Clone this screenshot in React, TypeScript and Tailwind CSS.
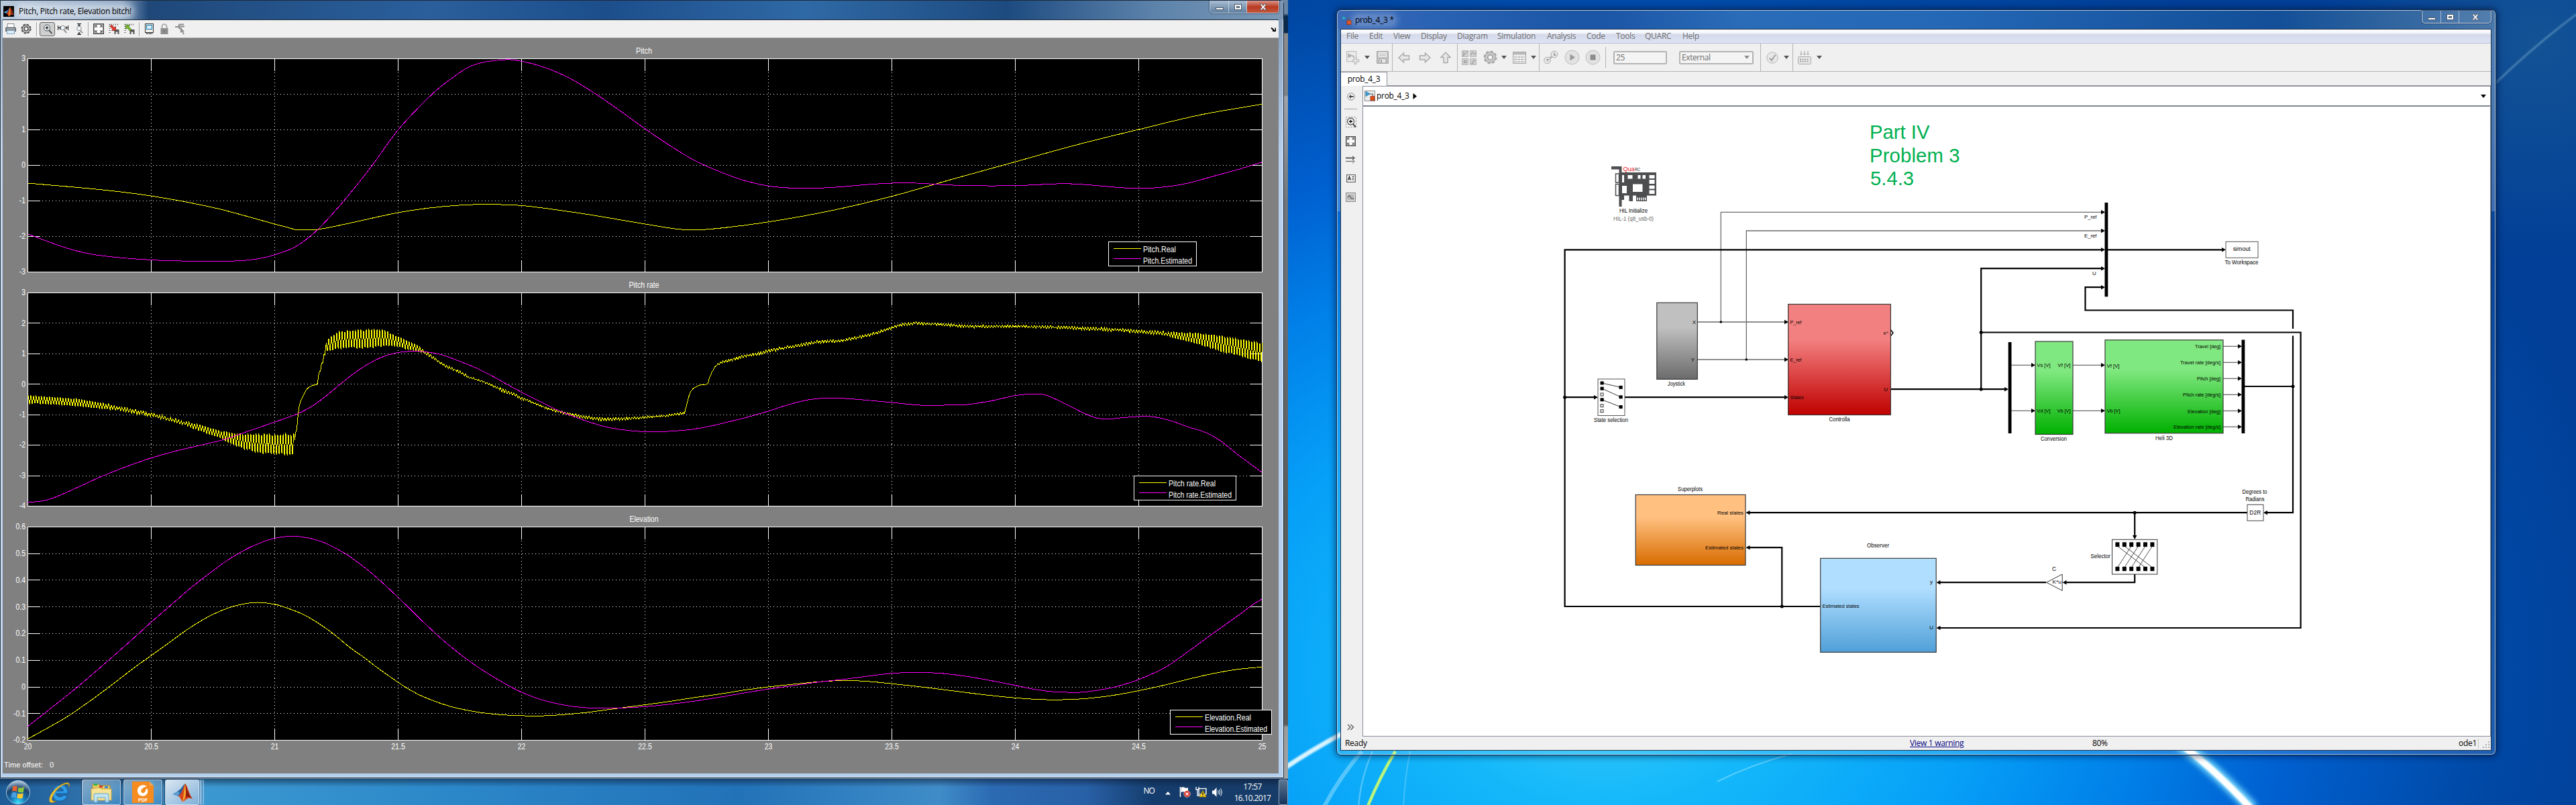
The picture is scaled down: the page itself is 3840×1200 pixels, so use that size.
import React from 'react';

/* ------------------------------------------------------------------ */
/* Shared helpers                                                      */
/* ------------------------------------------------------------------ */

type Pt = [number, number];

const SANS = 'Liberation Sans, Arial, sans-serif';
const UI = "font-['Open_Sans','Noto_Sans',sans-serif]";

type LabelProps = {
  x: number;
  y: number;
  children: string;
  w?: number;
  size?: number;
  anchor?: 'start' | 'middle' | 'end';
  fill?: string;
};

/* y is the vertical centre of the capitals */
function Label({ x, y, children, w, size = 12, anchor = 'start', fill = '#000' }: LabelProps) {
  return (
    <text
      x={x}
      y={y + size * 0.36}
      fontFamily={SANS}
      fontSize={size}
      textAnchor={anchor}
      fill={fill}
      textLength={w}
      lengthAdjust="spacingAndGlyphs"
    >
      {children}
    </text>
  );
}

/* ------------------------------------------------------------------ */
/* Scope data                                                          */
/* ------------------------------------------------------------------ */

const pitchReal: Pt[] = [
  [20, -0.5], [20.29, -0.68], [20.5, -0.86], [20.753, -1.19], [21, -1.65], [21.06, -1.76], [21.085, -1.81], [21.12, -1.815],
  [21.17, -1.81], [21.297, -1.635], [21.5, -1.33], [21.625, -1.2], [21.75, -1.12], [21.85, -1.1], [22, -1.13], [22.25, -1.36],
  [22.5, -1.65], [22.63, -1.79], [22.7, -1.815], [22.8, -1.77], [23, -1.59], [23.25, -1.28], [23.5, -0.87], [23.75, -0.38],
  [24, 0.1], [24.25, 0.58], [24.5, 1.01], [24.75, 1.42], [25, 1.72],
];
const pitchEst: Pt[] = [
  [20, -1.93], [20.155, -2.32], [20.277, -2.52], [20.5, -2.66], [20.75, -2.7], [20.87, -2.68], [20.93, -2.63], [21, -2.515],
  [21.086, -2.28], [21.172, -1.82], [21.28, -1], [21.395, 0], [21.5, 1], [21.628, 1.94], [21.7, 2.36], [21.8, 2.81],
  [21.93, 2.97], [22, 2.93], [22.1, 2.74], [22.2, 2.43], [22.3, 2.01], [22.4, 1.53], [22.5, 1.03], [22.6, 0.56], [22.7, 0.14],
  [22.8, -0.17], [22.9, -0.42], [23, -0.58], [23.1, -0.64], [23.2, -0.64], [23.3, -0.6], [23.4, -0.54], [23.5, -0.5],
  [23.6, -0.5], [23.7, -0.54], [23.8, -0.57], [24, -0.57], [24.19, -0.515], [24.28, -0.54], [24.38, -0.6], [24.5, -0.65],
  [24.6, -0.61], [24.69, -0.515], [24.79, -0.33], [24.9, -0.12], [25, 0.09],
];
const rateEst: Pt[] = [
  [20, -3.87], [20.05, -3.84], [20.1, -3.74], [20.2, -3.39], [20.3, -3.02], [20.4, -2.7], [20.5, -2.42], [20.6, -2.19],
  [20.7, -2], [20.8, -1.8], [20.9, -1.52], [21, -1.24], [21.095, -0.96], [21.157, -0.69], [21.212, -0.36], [21.265, 0],
  [21.337, 0.45], [21.4, 0.76], [21.448, 0.93], [21.5, 1.04], [21.55, 1.08], [21.614, 1.06], [21.68, 0.96], [21.75, 0.75],
  [21.82, 0.52], [21.89, 0.23], [21.945, -0.02], [22, -0.26], [22.07, -0.55], [22.14, -0.825], [22.195, -1.01],
  [22.264, -1.21], [22.33, -1.375], [22.4, -1.485], [22.5, -1.56], [22.58, -1.55], [22.67, -1.5], [22.75, -1.4],
  [22.83, -1.25], [22.917, -1.075], [23, -0.88], [23.09, -0.65], [23.17, -0.5], [23.25, -0.45], [23.35, -0.49],
  [23.5, -0.6], [23.62, -0.69], [23.75, -0.68], [23.8, -0.67], [23.9, -0.55], [24, -0.37], [24.07, -0.32], [24.12, -0.35],
  [24.2, -0.63], [24.27, -0.92], [24.33, -1.11], [24.38, -1.14], [24.43, -1.1], [24.5, -1.06], [24.56, -1.07],
  [24.63, -1.2], [24.7, -1.4], [24.77, -1.58], [24.83, -1.85], [24.9, -2.3], [24.95, -2.6], [25, -2.9],
];

/* time, centre, half amplitude of the ripple */
const rateReal: [number, number, number][] = [
  [20, -0.5, 0.13], [20.1, -0.54, 0.12], [20.2, -0.6, 0.12], [20.35, -0.76, 0.08], [20.5, -1, 0.07], [20.65, -1.31, 0.08],
  [20.78, -1.65, 0.12], [20.83, -1.8, 0.18], [20.88, -1.88, 0.26], [20.95, -1.95, 0.32], [21, -1.97, 0.34], [21.079, -1.98, 0.36],
  [21.08, -2, 0], [21.083, -1.65, 0], [21.09, -1.45, 0], [21.095, -0.97, 0], [21.1, -0.68, 0], [21.108, -0.5, 0],
  [21.117, -0.35, 0], [21.125, -0.22, 0], [21.133, -0.13, 0], [21.145, -0.07, 0], [21.158, -0.03, 0.02], [21.173, 0, 0],
  [21.176, 0.2, 0], [21.18, 0.41, 0], [21.186, 0.42, 0], [21.189, 0.69, 0], [21.196, 0.71, 0.02], [21.199, 1, 0.05],
  [21.205, 1.1, 0.12], [21.213, 1.28, 0.2], [21.225, 1.32, 0.22], [21.255, 1.45, 0.28], [21.3, 1.47, 0.31], [21.4, 1.5, 0.31],
  [21.445, 1.52, 0.28], [21.478, 1.45, 0.2], [21.5, 1.4, 0.18], [21.533, 1.3, 0.14], [21.575, 1.2, 0.1], [21.603, 1.07, 0.07],
  [21.63, 0.95, 0.06], [21.67, 0.7, 0.06], [21.7, 0.57, 0.04], [21.75, 0.4, 0.05], [21.79, 0.22, 0.04], [21.84, 0.1, 0.02],
  [21.88, -0.03, 0.03], [21.92, -0.19, 0.05], [21.96, -0.31, 0.05], [22, -0.45, 0.06], [22.03, -0.55, 0.04],
  [22.07, -0.68, 0.02], [22.1, -0.78, 0.03], [22.16, -0.92, 0.04], [22.25, -1.07, 0.05], [22.3, -1.13, 0.05],
  [22.34, -1.15, 0.06], [22.42, -1.13, 0.05], [22.5, -1.09, 0.04], [22.6, -1.02, 0.03], [22.66, -0.94, 0.04],
  [22.664, -0.82, 0], [22.67, -0.64, 0], [22.675, -0.46, 0], [22.684, -0.25, 0], [22.695, -0.14, 0], [22.71, -0.07, 0],
  [22.724, -0.025, 0], [22.754, 0, 0], [22.762, 0.24, 0.02], [22.77, 0.38, 0.02], [22.78, 0.53, 0.02], [22.79, 0.63, 0.02],
  [22.81, 0.72, 0.04], [22.86, 0.82, 0.05], [22.9, 0.92, 0.05], [22.95, 0.98, 0.05], [23, 1.1, 0.06], [23.05, 1.17, 0.06],
  [23.1, 1.24, 0.05], [23.2, 1.39, 0.05], [23.3, 1.43, 0.04], [23.4, 1.6, 0.05], [23.47, 1.77, 0.04], [23.54, 1.96, 0.05],
  [23.6, 2, 0.04], [23.7, 1.96, 0.04], [23.8, 1.9, 0.05], [24, 1.9, 0.04], [24.2, 1.86, 0.05], [24.4, 1.79, 0.06],
  [24.5, 1.73, 0.06], [24.6, 1.67, 0.07], [24.68, 1.57, 0.12], [24.75, 1.48, 0.2], [24.82, 1.36, 0.26], [24.9, 1.22, 0.28],
  [25, 1.04, 0.32],
];
const elevReal: Pt[] = [
  [20, -0.195], [20.15, -0.117], [20.25, -0.054], [20.335, 0.004], [20.432, 0.073], [20.5, 0.118], [20.568, 0.163],
  [20.655, 0.221], [20.743, 0.269], [20.82, 0.299], [20.879, 0.312], [20.93, 0.317], [21, 0.31], [21.053, 0.295],
  [21.12, 0.27], [21.19, 0.231], [21.247, 0.192], [21.306, 0.147], [21.364, 0.109], [21.41, 0.076], [21.5, 0.017],
  [21.55, -0.012], [21.6, -0.036], [21.7, -0.07], [21.8, -0.091], [21.9, -0.103], [22, -0.108], [22.1, -0.108],
  [22.25, -0.097], [22.4, -0.079], [22.5, -0.067], [22.6, -0.054], [22.7, -0.04], [22.8, -0.027], [22.9, -0.012],
  [23, 0], [23.1, 0.01], [23.2, 0.019], [23.3, 0.024], [23.4, 0.021], [23.5, 0.012], [23.6, 0.002], [23.7, -0.009],
  [23.8, -0.021], [23.9, -0.032], [24, -0.041], [24.1, -0.047], [24.18, -0.048], [24.28, -0.044], [24.4, -0.031],
  [24.5, -0.014], [24.6, 0.006], [24.7, 0.029], [24.8, 0.05], [24.9, 0.066], [25, 0.075],
];
const elevEst: Pt[] = [
  [20, -0.148], [20.083, -0.0875], [20.2, -0.001], [20.316, 0.091], [20.413, 0.17], [20.5, 0.243], [20.587, 0.313],
  [20.665, 0.375], [20.733, 0.424], [20.8, 0.47], [20.86, 0.504], [20.917, 0.531], [20.975, 0.551], [21.02, 0.561],
  [21.07, 0.565], [21.13, 0.56], [21.19, 0.545], [21.247, 0.52], [21.296, 0.494], [21.354, 0.455], [21.41, 0.413],
  [21.5, 0.336], [21.6, 0.245], [21.7, 0.161], [21.8, 0.089], [21.9, 0.03], [22, -0.02], [22.1, -0.053], [22.2, -0.072],
  [22.3, -0.08], [22.4, -0.079], [22.5, -0.074], [22.6, -0.065], [22.7, -0.053], [22.8, -0.039], [22.9, -0.023],
  [23, -0.008], [23.1, 0.005], [23.2, 0.018], [23.3, 0.028], [23.4, 0.04], [23.5, 0.051], [23.6, 0.054], [23.7, 0.051],
  [23.8, 0.04], [23.9, 0.024], [24, 0.006], [24.073, -0.008], [24.14, -0.017], [24.2, -0.02], [24.268, -0.02],
  [24.336, -0.012], [24.404, 0], [24.5, 0.028], [24.61, 0.075], [24.705, 0.136], [24.8, 0.2], [24.909, 0.272],
  [24.967, 0.312], [25, 0.33],
];

function ripple(data: [number, number, number][]): Pt[] {
  const out: Pt[] = [];
  const phase = [1, 0.9, -0.9, -1];
  let seed = 7;
  let k = 0;
  for (let i = 0; i <= 1840; i++) {
    const t = 20 + i / 368;
    while (k < data.length - 2 && data[k + 1][0] < t) k++;
    const a = data[k];
    const b = data[k + 1];
    const f = Math.min(1, Math.max(0, (t - a[0]) / (b[0] - a[0])));
    seed = (seed * 1103515245 + 12345) % 2147483648;
    const rnd = seed / 2147483648;
    const amp = a[2] + (b[2] - a[2]) * f;
    const wave = amp > 0.09 ? phase[i % 4] * (0.8 + 0.25 * rnd) : phase[i % 4] * (0.2 + 0.9 * rnd);
    out.push([t, a[1] + (b[1] - a[1]) * f + amp * wave]);
  }
  return out;
}

/* Cubic Hermite through the samples */
function smooth(pts: Pt[], sx: (t: number) => number, sy: (v: number) => number): string {
  const p = pts.map(([t, v]) => [sx(t), sy(v)] as Pt);
  const slope = p.map((_, i) => {
    const a = p[Math.max(0, i - 1)];
    const b = p[Math.min(p.length - 1, i + 1)];
    return (b[1] - a[1]) / (b[0] - a[0]);
  });
  let d = `M${p[0][0]} ${p[0][1].toFixed(1)}`;
  for (let i = 1; i < p.length; i++) {
    const h = (p[i][0] - p[i - 1][0]) / 3;
    d += `C${(p[i - 1][0] + h).toFixed(1)} ${(p[i - 1][1] + h * slope[i - 1]).toFixed(1)} ${(p[i][0] - h).toFixed(1)} ${(p[i][1] - h * slope[i]).toFixed(1)} ${p[i][0].toFixed(1)} ${p[i][1].toFixed(1)}`;
  }
  return d;
}

type PlotProps = {
  title: string;
  titleW: number;
  min: number;
  max: number;
  ticks: string[];
  real: Pt[];
  est: Pt[];
  jagged?: boolean;
  xLabels?: boolean;
  legend: { x: number; y: number; w: number; names: [string, string]; widths: [number, number] };
};

const YELLOW = '#ffff00';
const MAGENTA = '#ff00ff';

function Plot({ title, titleW, min, max, ticks, real, est, jagged, xLabels, legend }: PlotProps) {
  const L = 37.5;
  const R = 1877.5;
  const T = 30.5;
  const B = 348.5;
  const sx = (t: number) => L + (t - 20) * 368;
  const sy = (v: number) => T + ((max - v) / (max - min)) * (B - T);
  const realPath = jagged
    ? 'M' + real.map(([t, v]) => `${sx(t).toFixed(1)} ${sy(v).toFixed(1)}`).join('L')
    : smooth(real, sx, sy);
  const xs = [20, 20.5, 21, 21.5, 22, 22.5, 23, 23.5, 24, 24.5, 25];
  return (
    <svg width="1902" height={xLabels ? 372 : 349} className="block shrink-0 overflow-visible">
      <rect x={L} y={T} width={R - L} height={B - T} fill="#000" />
      <g stroke="#fff" strokeWidth="1" shapeRendering="crispEdges" fill="none">
        {xs.slice(1, -1).map((t) => (
          <g key={t}>
            <path d={`M${sx(t)} ${T}V${T + 18}M${sx(t)} ${B}V${B - 18}`} />
            <path d={`M${sx(t)} ${T + 20}V${B - 18}`} strokeDasharray="1 4" />
          </g>
        ))}
        {ticks.slice(1, -1).map((tk) => {
          const y = Math.round(sy(parseFloat(tk)) - 0.5) + 0.5;
          return (
            <g key={tk}>
              <path d={`M${L} ${y}H${L + 18}M${R} ${y}H${R - 19}`} />
              <path d={`M${L + 21} ${y}H${R - 19}`} strokeDasharray="1 4" />
            </g>
          );
        })}
        <rect x={L} y={T} width={R - L} height={B - T} />
        <path d={realPath} stroke={YELLOW} />
        <path d={smooth(est, sx, sy)} stroke={MAGENTA} />
      </g>
      <Label x={956} y={18.5} anchor="middle" w={titleW} fill="#fff">{title}</Label>
      {ticks.map((tk) => (
        <Label key={tk} x={34} y={sy(parseFloat(tk)) - 0.5} anchor="end" fill="#fff" w={tk.replace('-', '').replace('.', '').length * 5.8 + (tk.includes('-') ? 3.4 : 0) + (tk.includes('.') ? 3 : 0)}>
          {tk}
        </Label>
      ))}
      {xLabels &&
        xs.map((t) => (
          <Label key={t} x={sx(t)} y={358} anchor="middle" fill="#fff" w={t % 1 ? 20.5 : 11.5}>
            {String(t)}
          </Label>
        ))}
      <rect x={legend.x + 0.5} y={legend.y + 0.5} width={legend.w} height="36" fill="#000" stroke="#fff" />
      {[YELLOW, MAGENTA].map((c, i) => (
        <g key={c}>
          <path d={`M${legend.x + 8} ${legend.y + 10.5 + i * 15}h41`} stroke={c} />
          <Label x={legend.x + 52} y={legend.y + 11.5 + i * 17} fill="#fff" w={legend.widths[i]}>
            {legend.names[i]}
          </Label>
        </g>
      ))}
    </svg>
  );
}

/* ------------------------------------------------------------------ */
/* Icons                                                               */
/* ------------------------------------------------------------------ */

function MatlabLogo({ size, tile }: { size: number; tile?: boolean }) {
  return (
    <svg width={size} height={size} viewBox="0 0 32 32" className="shrink-0">
      {tile && <rect width="32" height="32" fill="#000" />}
      <path d="M1 19L9 14L13 17L9 22Z" fill="#5b9bd0" />
      <path d="M9 14C14 12 16 6 20 3L14 19L9 22L12 17Z" fill="#2c5f9a" />
      <path d="M20 3C17 8 15 20 9 22C13 22 14 29 16 30C22 29 22 22 31 26C26 19 23 5 20 3Z" fill="#d8461c" />
      <path d="M20 3C18 12 18 22 16 30C20 28 21 20 21 14Z" fill="#f5a62a" />
      <path d="M20 3C23 10 24 19 31 26C26 22 23 22 21 24C22 16 21 8 20 3Z" fill="#8c1e12" />
    </svg>
  );
}

function SimulinkLogo({ boxed }: { boxed?: boolean }) {
  return (
    <svg width="16" height="16" viewBox="0 0 16 16" className="shrink-0">
      {boxed && <rect x=".5" y=".5" width="15" height="15" fill="#ececec" stroke="#8c8c8c" />}
      <path d="M2 1.5L8.5 5L2 8.5Z" fill="#3aa4d8" stroke="#1b6c9c" strokeWidth=".7" />
      <path d="M8.500 5H12.500V9" fill="none" stroke="#555" />
      <rect x="9" y="8.700" width="6" height="6" fill="#e2501e" stroke="#9a2c0a" strokeWidth=".8" />
    </svg>
  );
}

function Gear({ size, color, bg }: { size: number; color: string; bg: string }) {
  return (
    <svg width={size} height={size} viewBox="0 0 20 20" className="shrink-0">
      <circle cx="10" cy="10" r="8" fill="none" stroke={color} strokeWidth="3" strokeDasharray="3.6 2.680" />
      <circle cx="10" cy="10" r="7.300" fill={bg} stroke={color} strokeWidth="1.500" />
      <circle cx="10" cy="10" r="3.700" fill="#f4f4f4" stroke={color} strokeWidth="2" />
    </svg>
  );
}

function Magnifier({ plus, r = 4.5 }: { plus?: boolean; r?: number }) {
  return (
    <svg width="16" height="18" viewBox="0 0 16 18" className="shrink-0">
      <path d="M10 11L14.500 16" stroke="#555" strokeWidth="2" />
      <circle cx="7" cy="7.500" r={r} fill="#eef6fb" stroke="#444" />
      {plus && <path d="M4.500 7.500h5M7 5v5" stroke="#000" strokeWidth="1.200" />}
    </svg>
  );
}

function FitIcon({ size }: { size: number }) {
  return (
    <svg width={size} height={size} viewBox="0 0 16 16" className="shrink-0">
      <rect x=".8" y=".8" width="14.400" height="14.400" fill="#fff" stroke="#4a4a4a" strokeWidth="1.600" />
      <path d="M3 6V3H6M10 3H13V6M13 10V13H10M6 13H3V10M3 3L6 6M13 3L10 6M13 13L10 10M3 13L6 10" stroke="#333" fill="none" />
    </svg>
  );
}

function AxisSave({ color, dark, flip }: { color: string; dark: string; flip?: boolean }) {
  return (
    <svg width="16" height="17" viewBox="0 0 16 17" className="shrink-0">
      <path d="M1 1.500H16" stroke="#555" strokeWidth="2" strokeDasharray="1 2" />
      <path d="M1.500 1V16" stroke="#555" strokeWidth="2" strokeDasharray="1 2" />
      <rect x="8.500" y="9" width="7" height="7" fill="#555" />
      <rect x="10.500" y="12.500" width="3" height="3.500" fill="#eee" />
      <path
        d="M2.500 2.500H8.500L7 4.500L11 9L8.500 11L4.500 6.800L2.500 8.500Z"
        fill={color}
        stroke={dark}
        strokeWidth=".7"
        transform={flip ? 'rotate(180 6.5 6.5)' : undefined}
      />
    </svg>
  );
}

function Caret({ color = '#555' }: { color?: string }) {
  return (
    <svg width="8" height="5" viewBox="0 0 8 5" className="shrink-0">
      <path d="M0 0H8L4 5Z" fill={color} />
    </svg>
  );
}

function Arrow({ rotate }: { rotate: string }) {
  return (
    <svg width="18" height="18" viewBox="0 0 18 18" className={`shrink-0 ${rotate}`}>
      <path d="M1 9L8.500 2V6H16.500V12H8.500V16Z" fill="#e6e6e6" stroke="#a8a8a8" strokeWidth="1.400" />
    </svg>
  );
}

/* ------------------------------------------------------------------ */
/* Left window: scope                                                  */
/* ------------------------------------------------------------------ */

function CaptionButtons({ active }: { active: boolean }) {
  const base = 'flex items-center justify-center border-r border-white/50';
  return (
    <div className="flex h-[19px] overflow-hidden rounded-b-[5px] border border-t-0 border-[#c5d5e8] shadow-[0_0_0_1px_rgba(15,35,65,0.6)]">
      <div className={`${base} w-[28px] ${active ? 'bg-gradient-to-b from-[#a9bdd3] to-[#5f7f9f]' : 'bg-white/5'}`}>
        <div className="mt-[5px] h-[4px] w-[12px] border border-[#4d5a6b] bg-white" />
      </div>
      <div className={`${base} w-[27px] ${active ? 'bg-gradient-to-b from-[#a9bdd3] to-[#5f7f9f]' : 'bg-white/5'}`}>
        <div className="h-[9px] w-[11px] border border-[#4d5a6b] bg-white p-[2px]">
          <div className="h-full w-full border border-[#4d5a6b] bg-[#8aa0ba]" />
        </div>
      </div>
      <div className={`flex w-[47px] items-center justify-center ${active ? 'bg-gradient-to-b from-[#d9948a] via-[#b93a22] to-[#c4553a]' : 'bg-white/5'}`}>
        <svg width="12" height="11" viewBox="0 0 12 11">
          <path d="M1 1h3l2 2.700L8 1h3L7.700 5.500L11 10H8L6 7.300L4 10H1L4.300 5.500Z" fill="#fff" stroke="#4a4a58" strokeWidth=".8" />
        </svg>
      </div>
    </div>
  );
}

function ToolbarSep() {
  return <div className="h-[21px] w-px shrink-0 bg-[#9a9a9a] shadow-[1px_0_0_#fff]" />;
}

function ScopeToolbar() {
  return (
    <div className="flex h-[27px] shrink-0 items-center border-b border-[#a0a0a0] bg-[#f0f0f0] pl-[4px] pr-[4px]">
      <svg width="16" height="16" viewBox="0 0 16 16">
        <rect x="3" y="0.500" width="10" height="7" fill="#fff" stroke="#888" />
        <rect x=".5" y="6" width="15" height="6" rx="1" fill="#7c848c" stroke="#5a6068" />
        <path d="M2 8h12" stroke="#c8ccd0" />
        <rect x="2.500" y="10.500" width="11" height="5" fill="#d8ecfa" stroke="#8aa8c0" />
      </svg>
      <div className="ml-[7px]"><Gear size={16} color="#555" bg="#d0d0d0" /></div>
      <div className="ml-[7px]"><ToolbarSep /></div>
      <div className="ml-[4px] flex h-[21px] w-[23px] items-center justify-center rounded-[3px] border border-[#666] bg-[#cfcfcf]"><Magnifier plus /></div>
      <svg width="16" height="17" viewBox="0 0 16 17" className="ml-[4px]">
        <path d="M.5 3v7M3.500 4v5M.5 6.500h3M15.500 3v7M12.500 4v5M12.500 6.500h3" stroke="#111" />
        <path d="M9 9l4 5" stroke="#777" strokeWidth="1.500" /><circle cx="7.500" cy="6.500" r="3.300" fill="#eef6fb" stroke="#888" />
      </svg>
      <svg width="12" height="17" viewBox="0 0 12 17" className="ml-[10px]">
        <path d="M3 .5h6M3 16.500h6M6 .5v4M6 13v4M4 2.500h4M4 14.500h4" stroke="#111" />
        <path d="M7 10l4 4" stroke="#777" strokeWidth="1.500" /><circle cx="6" cy="7.500" r="3.300" fill="#eef6fb" stroke="#888" />
      </svg>
      <div className="ml-[7px]"><ToolbarSep /></div>
      <div className="ml-[7px]"><FitIcon size={16} /></div>
      <div className="ml-[7px]"><AxisSave color="#e03a30" dark="#8a1410" flip /></div>
      <div className="ml-[7px]"><AxisSave color="#7ab82c" dark="#3c6a10" /></div>
      <div className="ml-[6px]"><ToolbarSep /></div>
      <svg width="13" height="17" viewBox="0 0 13 17" className="ml-[8px]">
        <rect x=".5" y=".5" width="12" height="13" fill="#f0f0e8" stroke="#333" />
        <rect x="2.500" y="2.500" width="8" height="6" fill="#d8f0fc" stroke="#1478b8" />
        <path d="M2.500 14v2M4.500 14v2M6.500 14v2M8.500 14v2M10.500 14v2" stroke="#222" />
      </svg>
      <svg width="12" height="17" viewBox="0 0 12 17" className="ml-[10px]">
        <path d="M2.500 8V4.500a3.500 3.500 0 0 1 7 0V8" fill="none" stroke="#a0a0a0" strokeWidth="1.700" />
        <rect x=".5" y="7" width="11" height="9" fill="#8e8e8e" /><path d="M6 10v3" stroke="#666" />
      </svg>
      <svg width="16" height="17" viewBox="0 0 16 17" className="ml-[10px]">
        <path d="M0 5h6M6 1v7M6 1.500h7M6 7.500h4M4 4.500h10" stroke="#8e8e8e" strokeWidth="1.800" fill="none" />
        <path d="M8 6l6 6h-2l2 4l-2 .5l-1.500-4L8 14Z" fill="#8e8e8e" />
      </svg>
      <svg width="8" height="7" viewBox="0 0 8 7" className="ml-auto">
        <path d="M1 1.500L5 5M3 6h4.500V1.500" stroke="#000" strokeWidth="2" fill="none" />
      </svg>
    </div>
  );
}

function ScopeWindow() {
  return (
    <div className="absolute left-0 top-0 flex h-[1160px] w-[1914px] flex-col rounded-tr-[6px] border border-[#1d2b3c] bg-[#b3cdec] bg-gradient-to-b from-[#7f98b4] via-[#b7d0ee] via-20% to-[#b5cfee] pl-[3px] pr-[7px] shadow-[inset_0_0_0_1px_rgba(255,255,255,0.6)]">
      <div className="-ml-[3px] -mr-[7px] flex h-[28px] shrink-0 items-start justify-between bg-[linear-gradient(90deg,#b9c9dc_0,#8ca5c4_180px,#1f4879_220px,#2a5f9c_640px,#1c4e8c_900px,#2f69a5_1200px,#1d4b80_1500px,#5d83ab_1720px,#7c98b5_1912px)] pl-[4px] pr-[6px]">
        <div className="flex h-[28px] items-center gap-[6px] pt-[4px]">
          <MatlabLogo size={16} tile />
          <span className={`${UI} rounded-full bg-white/40 px-px text-[12px] leading-[16px] tracking-[-0.3px] text-black shadow-[0_0_8px_4px_rgba(255,255,255,0.4)]`}>
            Pitch, Pitch rate, Elevation bitch!
          </span>
        </div>
        <CaptionButtons active />
      </div>
      <div className="flex h-[1124px] shrink-0 flex-col border-t border-[#1d2b3c] bg-[#808080]">
        <ScopeToolbar />
        <Plot
          title="Pitch" titleW={24} min={-3} max={3}
          ticks={['3', '2', '1', '0', '-1', '-2', '-3']}
          real={pitchReal} est={pitchEst}
          legend={{ x: 1648, y: 303, w: 131, names: ['Pitch.Real', 'Pitch.Estimated'], widths: [49, 73] }}
        />
        <Plot
          title="Pitch rate" titleW={45} min={-4} max={3}
          ticks={['3', '2', '1', '0', '-1', '-2', '-3', '-4']}
          real={ripple(rateReal)} est={rateEst} jagged
          legend={{ x: 1686, y: 303, w: 152, names: ['Pitch rate.Real', 'Pitch rate.Estimated'], widths: [70, 94] }}
        />
        <Plot
          title="Elevation" titleW={43} min={-0.2} max={0.6}
          ticks={['0.6', '0.5', '0.4', '0.3', '0.2', '0.1', '0', '-0.1', '-0.2']}
          real={elevReal} est={elevEst} xLabels
          legend={{ x: 1740, y: 303, w: 151, names: ['Elevation.Real', 'Elevation.Estimated'], widths: [69, 93] }}
        />
        <div className="flex items-center gap-[10px] pl-[2px] pt-[5px] font-['Liberation_Sans',Arial,sans-serif] text-[11px] leading-[16px] tracking-[0.1px] text-white">
          <span>Time offset:</span>
          <span>0</span>
        </div>
      </div>
    </div>
  );
}

/* ------------------------------------------------------------------ */
/* Taskbar                                                             */
/* ------------------------------------------------------------------ */

function TaskButton({ w, active, children }: { w: string; active?: boolean; children: React.ReactNode }) {
  return (
    <div className={`flex h-[38px] ${w} items-center justify-center rounded-[3px] border border-[#cfe2f2]/80 shadow-[0_0_0_1px_rgba(8,30,60,0.7)] ${active ? 'bg-gradient-to-br from-[#dbe7f1] to-[#7fb0d8]' : 'bg-gradient-to-br from-[#9dbbd2]/80 to-[#3f8cc6]/60'}`}>
      {children}
    </div>
  );
}

function Taskbar() {
  return (
    <div className="absolute left-0 top-[1160px] flex h-[40px] w-[1920px] items-center border-t border-[#7d93aa] bg-[linear-gradient(180deg,rgba(10,25,50,0.55)_0,rgba(10,25,50,0)_12px),linear-gradient(90deg,#1d5c96_0,#2a6aa4_90px,#3c98d0_300px,#2b86c8_700px,#2272b8_1100px,#3f8cc8_1400px,#2b6ab2_1480px,#2860a6_1620px,#143c6c_1720px,#183c68_1920px)]">
      <svg width="40" height="38" viewBox="0 0 40 38" className="ml-[7px]">
        <defs>
          <radialGradient id="orb" cx="50%" cy="95%" r="90%">
            <stop offset="0" stopColor="#3ce4ff" /><stop offset=".35" stopColor="#1678b8" /><stop offset=".7" stopColor="#1c4470" /><stop offset="1" stopColor="#a8c0d4" />
          </radialGradient>
        </defs>
        <circle cx="20" cy="19" r="17.500" fill="url(#orb)" stroke="#9cc4dc" />
        <path d="M12 11c3-2 5-1 7 0l-1 7c-2-1-5-1.500-7 0Z" fill="#e8622c" />
        <path d="M20.500 11.500c3 1.500 6 1 8.500-.5l-1 7.500c-3 1.500-6 1-8.500-.5Z" fill="#8cc83c" />
        <path d="M10.800 20c2.500-1.500 5-1 7 0l-1 7.500c-2-1.500-5-1.500-7 0Z" fill="#4aa0e4" />
        <path d="M19.300 20.500c3 1.500 6 1 8.500-.5l-1 7.500c-3 1.500-6 1-8.500-.5Z" fill="#fcc830" />
      </svg>
      <svg width="34" height="34" viewBox="0 0 34 34" className="ml-[25px]">
        <path d="M29 19H11.500c.5 5 8 6.500 11 2.500h6C26 29 19 31.500 12.500 29.500C4.500 26 4 14 11 8.500C19 2.500 30 7 29 19ZM11.800 15h10.700c-.5-5.500-9.500-6-10.700 0Z" fill="#2c9ce8" stroke="#0c4c94" strokeWidth=".8" />
        <path d="M31 9C33 4 30 1 23 4C11 9 2 20 1.500 28C1.500 34 7 33 12 30C6 31.500 4 29 6 24C9 16 17 8 25 5C29 3.500 31 5 31 9Z" fill="#f6c832" stroke="#a87808" strokeWidth=".6" />
      </svg>
      <div className="ml-[16px] flex gap-[4px]">
        <TaskButton w="w-[58px]">
          <svg width="34" height="32" viewBox="0 0 34 32">
            <path d="M4 4h9l2 2h15v20H4Z" fill="#e8c860" stroke="#b08c28" />
            <rect x="6" y="3" width="5" height="3" fill="#28b848" /><rect x="14" y="6" width="5" height="3" fill="#d03a2c" /><rect x="22" y="7" width="5" height="3" fill="#3a8ce0" />
            <path d="M2 11l12-2l3 2h15v17H2Z" fill="#f8e494" stroke="#c8a440" />
            <path d="M6 31V20q0-2 2-2h18q2 0 2 2v11h-5v-7H11v7Z" fill="#bfe4f6" fillOpacity=".9" stroke="#5ca4d0" />
          </svg>
        </TaskButton>
        <TaskButton w="w-[58px]">
          <div className="relative flex h-[32px] w-[32px] flex-col items-center bg-[#f68b1f]">
            <svg width="32" height="32" viewBox="0 0 32 32" className="absolute inset-0">
              <path d="M26 0V6H32V0Z" fill="#5ba3d2" /><path d="M26 0V6H32Z" fill="#f9a550" />
              <path d="M22 7C14 2 7 8 8 15C9 23 20 24 23 17C24 14 23 11 21 10C20 14 19 18 15 17C11 15 14 9 22 7Z" fill="#fff" />
            </svg>
            <span className="mt-auto font-['Liberation_Sans',Arial,sans-serif] text-[7px] font-bold leading-[9px] text-white">PDF</span>
          </div>
        </TaskButton>
        <div className="flex">
          <TaskButton w="w-[51px]" active><MatlabLogo size={32} /></TaskButton>
          <div className="h-[38px] w-[3px] rounded-r-[3px] border-r border-[#cfe2f2]/80 bg-[#8db4d4]/60" />
          <div className="h-[38px] w-[4px] rounded-r-[3px] border-r border-[#cfe2f2]/60 bg-[#6fa4cf]/50" />
        </div>
      </div>
      <div className={`${UI} ml-auto flex h-full items-center text-white`}>
        <span className="mb-[4px] text-[12px] leading-none tracking-[-0.9px]">NO</span>
        <svg width="8" height="5" viewBox="0 0 8 5" className="ml-[16px] mt-[3px]"><path d="M4 0L8 4.500H0Z" fill="#fff" /></svg>
        <svg width="17" height="17" viewBox="0 0 17 17" className="ml-[13px]">
          <path d="M1.500 1v15" stroke="#fff" strokeWidth="1.500" /><path d="M2.500 2q3-1.500 5.500 0t5 0v7q-3 1.500-5 0t-5.500 0Z" fill="#fff" />
          <circle cx="11.500" cy="11.500" r="4.800" fill="#d8281c" stroke="#fff" strokeWidth=".6" /><path d="M9.500 9.500l4 4M13.500 9.500l-4 4" stroke="#fff" strokeWidth="1.500" />
        </svg>
        <svg width="17" height="17" viewBox="0 0 17 17" className="ml-[7px]">
          <rect x="5" y="3.500" width="11" height="8.500" fill="#24486e" stroke="#fff" strokeWidth="1.300" />
          <path d="M1 1v4h4V1M3 5v9h4" stroke="#fff" strokeWidth="1.300" fill="none" />
          <path d="M11 6.500L16.300 16H5.700Z" fill="#f8d020" stroke="#8a6c00" strokeWidth=".6" /><path d="M11 9.500v3.500M11 14v1" stroke="#000" strokeWidth="1.300" />
        </svg>
        <svg width="16" height="16" viewBox="0 0 16 16" className="ml-[7px]">
          <path d="M1 5.500h2.500L7.500 1v14L3.500 10.500H1Z" fill="#fff" /><path d="M9.500 5.500q1.500 2.500 0 5M11.500 4q2.500 4 0 8M13.500 2.500q3.500 5.500 0 11" stroke="#fff" fill="none" />
        </svg>
        <div className="ml-[16px] w-[58px] whitespace-nowrap text-center text-[12px] leading-[17px] tracking-[-0.65px]">
          <div>17:57</div>
          <div>16.10.2017</div>
        </div>
        <div className="ml-[10px] h-[38px] w-[14px] rounded-[2px] border border-[#8ea5bd] bg-gradient-to-b from-[#5c7590] to-[#16335a]" />
      </div>
    </div>
  );
}

/* ------------------------------------------------------------------ */
/* Simulink diagram                                                    */
/* ------------------------------------------------------------------ */

type Dir = 'r' | 'l' | 'd';

/* Arrow head whose tip is at x, y */
function Head({ x, y, dir = 'r' }: { x: number; y: number; dir?: Dir }) {
  const d = dir === 'r' ? `M${x} ${y}l-6 -3.3v6.6Z` : dir === 'l' ? `M${x} ${y}l6 -3.3v6.6Z` : `M${x} ${y}l-3.3 -6h6.6Z`;
  return <path d={d} fill="#000" />;
}

function Block({ x, y, w, h, fill }: { x: number; y: number; w: number; h: number; fill: string }) {
  return <rect x={x} y={y} width={w} height={h} fill={fill} stroke="#3a3a3a" strokeWidth="1.200" />;
}

const grads: [string, string, string][] = [
  ['gGray', '#c0c0c0', '#6b6b6b'],
  ['gRed', '#f38080', '#c00000'],
  ['gGreen', '#80e880', '#00b000'],
  ['gOrange', '#ffc080', '#d86c00'],
  ['gBlue', '#b0deff', '#50a0d8'],
];

const heliOut: [string, number, number][] = [
  ['Travel [deg]', 516.3, 38], ['Travel rate [deg/s]', 540.3, 60], ['Pitch [deg]', 564.3, 35],
  ['Pitch rate [deg/s]', 588.3, 56], ['Elevation [deg]', 612.5, 49], ['Elevation rate [deg/s]', 636.3, 70],
];

function Diagram() {
  const sel = [3156.4, 3166.8, 3177.2, 3187.6, 3198, 3208.4];
  const cross = [4, 5, 0, 1, 2, 3];
  return (
    <svg width="1680" height="938" viewBox="2032 159 1680 938" className="block">
      <defs>
        {grads.map(([id, a, b]) => (
          <linearGradient key={id} id={id} x1="0" y1="0" x2="0" y2="1">
            <stop offset="0" stopColor={a} /><stop offset=".32" stopColor={a} /><stop offset="1" stopColor={b} />
          </linearGradient>
        ))}
      </defs>

      <g fontFamily={SANS} fontSize="29.300" fill="#00b050">
        <text x="2787" y="207">Part IV</text>
        <text x="2787" y="241.500" textLength="134.500">Problem 3</text>
        <text x="2788" y="275.700">5.4.3</text>
      </g>

      {/* HIL card */}
      <g fill="#4d4e50">
        <path d="M2402 248h15.500v60h-4v-55.500h-11.500Z" />
        <rect x="2417" y="257" width="52" height="34.500" />
        <path d="M2408.500 259h5v13h-5ZM2408.500 274.500h5v17h-5Z" fill="#fff" stroke="#4d4e50" strokeWidth="1.500" />
        <path d="M2417 291h4v7h-4ZM2428.500 291h5.500v9h-5.500ZM2439 291h16v9h-16Z" />
        <path d="M2426.500 261h7v5.500h-7ZM2441.500 261h4v5.500h-4ZM2448.500 261h4.500v5.500h-4.500ZM2458.500 261h8v5h-8ZM2458.500 268h8v6h-8ZM2458.500 276.500h8v5h-8ZM2458.500 283.500h8v5.500h-8ZM2434 274.500h14.500v11.500h-14.500ZM2418 277h7v11h-7ZM2418 261h3v11h-3Z" fill="#fff" />
        <path d="M2440.500 294.500h1.500v4h-1.500ZM2443.500 294.500h1.500v4h-1.500ZM2446.500 294.500h1.500v4h-1.500ZM2449.500 294.500h1.500v4h-1.500ZM2452 294.500h1.500v4h-1.500Z" fill="#fff" />
      </g>
      <Label x={2419.5} y={251.8} size={9} w={17} fill="#e8141c">Qua</Label>
      <Label x={2437} y={252.3} size={7.5} w={8} fill="#222">RC</Label>
      <Label x={2435} y={314} size={8.5} w={42} anchor="middle">HIL Initialize</Label>
      <Label x={2435} y={326} size={8.5} w={60} anchor="middle" fill="#666">HIL-1 (q8_usb-0)</Label>

      {/* thin signals */}
      <g fill="none" stroke="#6a6a6a" strokeWidth="1.300">
        <path d="M2530 480H2660M2565.300 480V316.300H3132M2530 536H2660M2603.300 536V344H3132" />
        <path d="M2998 544.300H3028M2998 612.300H3028M3090 544.300H3132M3090 612.300H3132" />
        {heliOut.map(([n, y]) => <path key={n} d={`M3314 ${y}H3336`} />)}
      </g>

      {/* vector signals */}
      <g fill="none" stroke="#000" strokeWidth="2.200">
        <path d="M3132 372.300H2332.600V904H2713" />
        <path d="M2332.600 592.200H2377M2422 592.200H2660" />
        <path d="M3142 372.300H3312" />
        <path d="M2818.500 580.200H2988M2953.200 580V400.200H3132" />
        <path d="M2953.200 495.500H3429.600V936H2891" />
        <path d="M3132 428.200H3108.500V462.500H3418V490M3418 500.500V764.200H3379" />
        <path d="M3346 576H3418" />
        <path d="M3350 764.200H2608M3182.200 764V799M3182.200 856V868.200H3080M3050 868.200H2891" />
        <path d="M2656.300 904V816.200H2608" />
      </g>
      <g fill="#000">
        {[[2332.6, 592.2], [2953.2, 495.5], [2953.2, 580.2], [3418, 576], [3182.2, 764.2], [2656.3, 904]].map(([x, y]) => (
          <circle key={`${x}-${y}`} cx={x} cy={y} r="2.500" />
        ))}
        <circle cx="2565.300" cy="480" r="1.800" />
        <circle cx="2603.300" cy="536" r="1.800" />
      </g>

      {[316.3, 344, 372.3, 400.2, 428.2].map((y) => <Head key={y} x={3138} y={y} />)}
      {[480, 536, 592.2].map((y) => <Head key={y} x={2666} y={y} />)}
      {heliOut.map(([n, y]) => <Head key={n} x={3342} y={y} />)}
      <Head x={2382} y={592.2} />
      <Head x={3318} y={372.3} />
      <Head x={2994} y={580.2} />
      <Head x={3034} y={544.3} /><Head x={3034} y={612.3} />
      <Head x={3138} y={544.3} /><Head x={3138} y={612.3} />
      <Head x={3374} y={764.2} dir="l" />
      <Head x={2602.5} y={764.2} dir="l" /><Head x={2602.5} y={816.2} dir="l" />
      <Head x={2886.5} y={868.2} dir="l" /><Head x={2886.5} y={936} dir="l" />
      <Head x={3074.500} y={868.2} dir="l" />
      <Head x={3182.2} y={804} dir="d" />

      {/* mux bars */}
      <path d="M3137.500 302h4.800v140.300h-4.800ZM2993.700 510h4.800v136h-4.800ZM3341.500 506.500h4.800v139.500h-4.800Z" fill="#000" />

      {/* joystick */}
      <Block x={2469.8} y={451.3} w={60.5} h={114} fill="url(#gGray)" />
      <Label x={2528} y={480.3} size={8} anchor="end">X</Label>
      <Label x={2526} y={536.3} size={8} anchor="end">Y</Label>
      <Label x={2499} y={572} size={8.500} w={26} anchor="middle">Joystick</Label>

      {/* controller */}
      <Block x={2665.600} y={453.500} w={152.800} h={165} fill="url(#gRed)" />
      <Label x={2668.500} y={480.300} size={8} w={17}>P_ref</Label>
      <Label x={2668.500} y={536.300} size={8} w={17}>E_ref</Label>
      <Label x={2668.500} y={592.500} size={8} w={20}>States</Label>
      <Label x={2815} y={496.300} size={8} anchor="end">x^</Label>
      <Label x={2814} y={580.300} size={8} anchor="end">U</Label>
      <path d="M2818.800 492l3.200 4.200l-3.200 4.200" fill="none" stroke="#000" strokeWidth="1.500" />
      <Label x={2742} y={625} size={8.500} w={31} anchor="middle">Controlla</Label>

      {/* state selection */}
      <rect x="2382" y="565" width="40" height="54.500" fill="#fff" stroke="#555" />
      {[571, 579.2, 595.8].map((y, i) => (
        <g key={y}>
          <path d={`M2388 ${y}L2416 ${[577.4, 591.8, 606.6][i]}`} stroke="#222" strokeWidth=".9" />
          <rect x="2385.500" y={y - 2.500} width="5.200" height="5" />
          <rect x="2413.500" y={[577.4, 591.8, 606.6][i] - 2.500} width="5.200" height="5" />
        </g>
      ))}
      {[588, 604.7, 612.7].map((y) => <rect key={y} x="2386" y={y - 2} width="4" height="4" fill="#fff" stroke="#333" />)}
      <Label x={2401.500} y={626} size={8.500} w={51} anchor="middle">State selection</Label>

      {/* workspace sink */}
      <Label x={3107} y={323} size={8} w={18.500}>P_ref</Label>
      <Label x={3107} y={351} size={8} w={18.500}>E_ref</Label>
      <Label x={3119} y={406.700} size={8}>U</Label>
      <rect x="3318" y="360.300" width="48" height="24" fill="#fff" stroke="#555" />
      <Label x={3341.700} y={371} size={8.500} w={26} anchor="middle">simout</Label>
      <Label x={3341.500} y={391} size={8.500} w={50} anchor="middle">To Workspace</Label>

      {/* conversion */}
      <Block x={3034} y={509} w={56} h={138.500} fill="url(#gGreen)" />
      <Label x={3036.500} y={543.800} size={8} w={20}>Vs [V]</Label>
      <Label x={3036.500} y={611.800} size={8} w={20}>Vd [V]</Label>
      <Label x={3086.500} y={543.800} size={8} w={19} anchor="end">Vf [V]</Label>
      <Label x={3086.500} y={611.800} size={8} w={20} anchor="end">Vb [V]</Label>
      <Label x={3061.500} y={654} size={8.500} w={39} anchor="middle">Conversion</Label>

      {/* helicopter */}
      <Block x={3138} y={506.800} w={176} h={139} fill="url(#gGreen)" />
      <Label x={3140.500} y={544.800} size={8} w={19}>Vf [V]</Label>
      <Label x={3140.500} y={612.500} size={8} w={20}>Vb [V]</Label>
      {heliOut.map(([n, y, w]) => <Label key={n} x={3310} y={y + 0.2} size={8} w={w} anchor="end">{n}</Label>)}
      <Label x={3226} y={653} size={8.500} w={26} anchor="middle">Heli 3D</Label>

      {/* superplots */}
      <Block x={2438.200} y={737.500} w={163.800} h={105} fill="url(#gOrange)" />
      <Label x={2519.500} y={729} size={8.500} w={37} anchor="middle">Superplots</Label>
      <Label x={2599} y={764.400} size={8} w={39} anchor="end">Real states</Label>
      <Label x={2599} y={816.400} size={8} w={57} anchor="end">Estimated states</Label>

      {/* observer */}
      <Block x={2713.700} y={832.300} w={172.500} h={140} fill="url(#gBlue)" />
      <Label x={2799.600} y={813} size={8.500} w={33} anchor="middle">Observer</Label>
      <Label x={2716.500} y={903.500} size={8} w={55}>Estimated states</Label>
      <Label x={2881} y={867.500} size={8} anchor="end">y</Label>
      <Label x={2882} y={935.500} size={8} anchor="end">U</Label>

      {/* degrees to radians */}
      <Label x={3361} y={733} size={8.500} w={37} anchor="middle">Degrees to</Label>
      <Label x={3361.500} y={744} size={8.500} w={28} anchor="middle">Radians</Label>
      <rect x="3350" y="752.300" width="24" height="24" fill="#fff" stroke="#444" />
      <Label x={3361.800} y={763.500} size={8.500} w={17} anchor="middle">D2R</Label>

      {/* selector */}
      <rect x="3148.500" y="804.300" width="67.300" height="51.700" fill="#fff" stroke="#333" />
      {sel.map((x, i) => (
        <g key={x}>
          <path d={`M${x} 814L${sel[cross[i]]} 846`} stroke="#222" strokeWidth=".8" />
          <rect x={x - 3} y="808.300" width="6" height="6.800" />
          <rect x={x - 3} y="844.800" width="6" height="6.400" />
        </g>
      ))}
      <Label x={3116.500} y={829} size={8.500} w={29.500}>Selector</Label>

      {/* gain */}
      <path d="M3050.500 868.200L3074.200 856V880.400Z" fill="#fff" stroke="#333" />
      <Label x={3059.500} y={867.300} size={8} w={13.500}>K*u</Label>
      <Label x={3062} y={848} size={8.500} anchor="middle">C</Label>
    </svg>
  );
}

/* ------------------------------------------------------------------ */
/* Right window: model editor                                          */
/* ------------------------------------------------------------------ */

const menus: [string, string][] = [
  ['File', 'w-[34px]'], ['Edit', 'w-[36px]'], ['View', 'w-[41px]'], ['Display', 'w-[54px]'], ['Diagram', 'w-[60px]'],
  ['Simulation', 'w-[74px]'], ['Analysis', 'w-[59px]'], ['Code', 'w-[44px]'], ['Tools', 'w-[43px]'], ['QUARC', 'w-[56px]'], ['Help', 'w-[40px]'],
];

function Sep({ short }: { short?: boolean }) {
  return <div className={`w-px shrink-0 bg-[#b4b4b4] ${short ? 'my-[5px]' : ''}`} />;
}

function Cell({ w, children }: { w: string; children?: React.ReactNode }) {
  return <div className={`flex shrink-0 items-center justify-center ${w}`}>{children}</div>;
}

function EditorToolbar() {
  return (
    <div className="flex h-[43px] shrink-0 items-stretch border-b border-t border-b-[#b4b4b4] border-t-[#b9c2dc] bg-[#f0f0f0]">
      <Cell w="w-[33px] pl-[2px]">
        <svg width="20" height="20" viewBox="0 0 20 20">
          <rect x=".7" y=".7" width="14" height="15" fill="#ececec" stroke="#b4b4b4" />
          <path d="M3 4l5 3l-5 3ZM8 7h3v3" fill="#b0b0b0" stroke="#a8a8a8" />
          <path d="M12 10h3v3h4v3h-4v3.500h-3V16H9v-3h3Z" fill="#e4e4e4" stroke="#b4b4b4" />
        </svg>
      </Cell>
      <Cell w="w-[12px]"><Caret /></Cell>
      <Cell w="w-[31px] pl-[2px]">
        <svg width="18" height="19" viewBox="0 0 18 19">
          <rect x=".7" y=".7" width="16.600" height="17.600" fill="#c4c4c4" stroke="#9c9c9c" />
          <rect x="3" y="2" width="12" height="7" fill="#f4f4f4" /><path d="M4 4.500h10M4 7h10" stroke="#a8a8a8" />
          <rect x="4" y="11.500" width="10" height="6.500" fill="#e8e8e8" stroke="#a0a0a0" /><rect x="6" y="13" width="2" height="4" fill="#999" />
        </svg>
      </Cell>
      <Sep />
      <Cell w="w-[34px]"><Arrow rotate="rotate-0" /></Cell>
      <Cell w="w-[28px]"><Arrow rotate="rotate-180" /></Cell>
      <Cell w="w-[34px]"><Arrow rotate="rotate-90" /></Cell>
      <Sep />
      <Cell w="w-[34px]">
        <svg width="22" height="22" viewBox="0 0 22 22">
          <path d="M.5.5h9v9h-9ZM12.500.5h9v9h-9ZM.5 12.500h9v9h-9ZM12.500 12.500h9v9h-9Z" fill="#d0d0d0" stroke="#b4b4b4" />
          <path d="M1 9L9 1M3 2v6M14 7q2-7 3.500-2.500T21 3M3.500 15.500h3v3h-3ZM14 19.500h3v-4h3" stroke="#909090" fill="none" />
        </svg>
      </Cell>
      <Cell w="w-[28px]"><Gear size={21} color="#a8a8a8" bg="#d4d4d4" /></Cell>
      <Cell w="w-[13px]"><Caret /></Cell>
      <Cell w="w-[32px] pl-[2px]">
        <svg width="20" height="18" viewBox="0 0 20 18">
          <rect x=".6" y=".6" width="18.800" height="16.800" fill="#eee" stroke="#a0a0a0" /><rect x="1" y="1" width="18" height="3.500" fill="#b8b8b8" />
          <path d="M2 8h16M2 11.500h16M2 15h16" stroke="#999" strokeDasharray="4 1" />
        </svg>
      </Cell>
      <Cell w="w-[12px]"><Caret /></Cell>
      <Cell w="w-[2px]" />
      <Sep />
      <Cell w="w-[34px]">
        <svg width="22" height="21" viewBox="0 0 22 21">
          <path d="M9 12L14 8" stroke="#b8b8b8" strokeWidth="3" />
          <circle cx="5.500" cy="15" r="4.800" fill="#e8e8e8" stroke="#a8a8a8" /><circle cx="16" cy="6" r="4.800" fill="#e8e8e8" stroke="#a8a8a8" />
          <path d="M4 13h4l-2 4ZM15 3v5h4Z" fill="#999" />
        </svg>
      </Cell>
      <Cell w="w-[29px]">
        <svg width="23" height="23" viewBox="0 0 23 23"><circle cx="11.500" cy="11.500" r="10.500" fill="#e2e2e2" stroke="#bcbcbc" /><path d="M8.500 6.500L16 11.500L8.500 16.500Z" fill="#999" /></svg>
      </Cell>
      <Cell w="w-[33px]">
        <svg width="23" height="23" viewBox="0 0 23 23"><circle cx="11.500" cy="11.500" r="10.500" fill="#e2e2e2" stroke="#bcbcbc" /><rect x="7.500" y="7.500" width="8" height="8" fill="#8c8c8c" /></svg>
      </Cell>
      <Cell w="w-[2px]" />
      <Sep short />
      <div className={`${UI} my-auto ml-[11px] flex h-[20px] w-[80px] shrink-0 items-center rounded-[2px] border-2 border-[#b4b4b4] bg-[#f4f4f4] pl-[2px] text-[12px] tracking-[-0.4px] text-[#6d6d6d]`}>25</div>
      <div className={`${UI} my-auto ml-[18px] flex h-[20px] w-[111px] shrink-0 items-center justify-between rounded-[2px] border-2 border-[#b4b4b4] bg-[#f4f4f4] px-[2px] text-[12px] tracking-[-0.4px] text-[#6d6d6d]`}>
        External
        <div className="mr-[2px] flex"><Caret color="#8c8c8c" /></div>
      </div>
      <Cell w="w-[10px]" />
      <Sep />
      <Cell w="w-[33px]">
        <svg width="18" height="18" viewBox="0 0 18 18"><circle cx="9" cy="9" r="8.200" fill="#e8e8e8" stroke="#b4b4b4" /><path d="M5 9.500l3 3.500L13.500 4.500" stroke="#a0a0a0" strokeWidth="2" fill="none" /></svg>
      </Cell>
      <Cell w="w-[10px]"><Caret /></Cell>
      <Cell w="w-[4px]" />
      <Sep />
      <Cell w="w-[33px]">
        <svg width="20" height="20" viewBox="0 0 20 20">
          <rect x=".6" y="8.500" width="18.800" height="11" rx="1" fill="#e8e8e8" stroke="#a8a8a8" />
          <path d="M3 12.500h14M3 15.500h14" stroke="#8c8c8c" strokeWidth="1.500" strokeDasharray="2 1.500" />
          <path d="M5 0v6M10 0v6M15 0v6M3.500 4l1.500 2l1.500-2M8.500 4l1.500 2l1.500-2M13.500 4l1.500 2l1.500-2" stroke="#a0a0a0" fill="none" />
        </svg>
      </Cell>
      <Cell w="w-[12px]"><Caret /></Cell>
    </div>
  );
}

function Palette() {
  return (
    <div className="flex w-[33px] shrink-0 flex-col items-center border-r border-[#8a8e9c] bg-[#f0f0f0] pr-[3px]">
      <svg width="12" height="12" viewBox="0 0 12 12" className="mt-[10px]">
        <circle cx="6" cy="6" r="5.200" fill="#f4f4f4" stroke="#888" /><path d="M2.500 6L6 3V5H9.500V7H6V9Z" fill="#444" />
      </svg>
      <div className="mt-[12px] h-px w-[19px] bg-[#a0a0a0]" />
      <svg width="16" height="16" viewBox="0 0 16 16" className="mt-[11px]">
        <rect x=".5" y=".5" width="15" height="15" fill="none" stroke="#888" strokeDasharray="2 2" />
        <circle cx="7.500" cy="7" r="5" fill="#f8f8f8" stroke="#555" strokeWidth="1.300" /><path d="M5 7h5M7.500 4.500v5" stroke="#000" strokeWidth="1.300" /><path d="M11 11l4 4.500" stroke="#444" strokeWidth="2" />
      </svg>
      <div className="mt-[13px]"><FitIcon size={15} /></div>
      <svg width="15" height="12" viewBox="0 0 15 12" className="mt-[14px]">
        <path d="M0 3.500h12" stroke="#222" strokeWidth="1.400" /><path d="M10 .8L13.500 3.500L10 6" stroke="#222" fill="none" />
        <path d="M0 8.500h12" stroke="#777" strokeWidth="1.400" /><path d="M10 6L13.500 8.500L10 11.500" stroke="#777" fill="none" />
      </svg>
      <svg width="14" height="12" viewBox="0 0 14 12" className="mt-[16px]">
        <rect x=".6" y=".6" width="12.800" height="10.800" fill="#fafafa" stroke="#666" strokeWidth="1.200" />
        <path d="M2.500 8.500L4.500 3L6.500 8.500M3.200 7h2.600" stroke="#222" strokeWidth="1.200" fill="none" /><path d="M8.500 3.500h3M8.500 5.800h3M8.500 8h3" stroke="#333" />
      </svg>
      <svg width="15" height="14" viewBox="0 0 15 14" className="mt-[15px]">
        <rect x=".6" y=".6" width="13.800" height="12.800" fill="#e8e8e8" stroke="#888" strokeWidth="1.200" /><rect x="2.500" y="2.500" width="10" height="9" fill="#b8b8b8" />
        <path d="M3 8q2-6 4-1.500t5.500 2" stroke="#666" strokeWidth="1.300" fill="none" />
      </svg>
      <svg width="11" height="10" viewBox="0 0 11 10" className="mb-[9px] mt-auto">
        <path d="M1 1l4 4l-4 4M5.500 1l4 4l-4 4" stroke="#555" strokeWidth="1.300" fill="none" />
      </svg>
    </div>
  );
}

function EditorWindow() {
  return (
    <div className="absolute left-[1992px] top-[14px] flex h-[1112px] w-[1729px] flex-col rounded-[7px] border border-[#10284c] bg-[linear-gradient(180deg,rgba(255,255,255,0.28)_0,rgba(255,255,255,0.22)_300px,rgba(255,255,255,0.02)_300px,rgba(255,255,255,0.12)_100%)] pl-[5px] pr-[6px] shadow-[0_0_10px_2px_rgba(0,15,50,0.55),inset_0_0_0_1px_rgba(220,240,255,0.65)]">
      <div className="-ml-[4px] -mr-[5px] mt-px flex h-[27px] shrink-0 items-start justify-between rounded-t-[5px] bg-[linear-gradient(90deg,#3d6ab8_0,#2a62b4_140px,#1c56a6_350px,#1c56a6_400px,#2a6cb8_600px,#2468b6_900px,#1a58a4_1200px,#134f98_1400px,#2c629e_1550px,#4a78aa_1727px)] pl-[5px] pr-[5px]">
        <div className="flex h-[27px] items-center gap-[3px] pt-px">
          <SimulinkLogo />
          <span className={`${UI} rounded-full bg-white/20 px-[2px] text-[12px] leading-[16px] tracking-[-0.3px] text-black shadow-[0_0_8px_4px_rgba(255,255,255,0.2)]`}>prob_4_3 *</span>
        </div>
        <CaptionButtons active={false} />
      </div>
      <div className="flex h-[1076px] shrink-0 flex-col border border-[#1c3350] bg-[#f0f0f0]">
        <div className={`${UI} flex h-[20px] shrink-0 items-center bg-[linear-gradient(180deg,#ffffff_0,#eef1f8_6px,#d5daeb_7px,#dfe4f4_100%)] pl-[8px] text-[12px] leading-none tracking-[-0.25px] text-[#6d6d6d]`}>
          {menus.map(([m, w]) => <div key={m} className={`${w} shrink-0`}>{m}</div>)}
        </div>
        <EditorToolbar />
        <div className="flex h-[21px] shrink-0 items-stretch">
          <div className={`${UI} z-10 flex w-[69px] items-center justify-center border-r border-t border-[#8a8e9c] bg-white text-[12px] tracking-[-0.3px] text-black`}>prob_4_3</div>
          <div className="flex-1 border-b border-[#9a9a9a]" />
        </div>
        <div className="flex min-h-0 flex-1">
          <Palette />
          <div className="flex flex-1 flex-col border-r border-[#8a8e9c]">
            <div className={`${UI} flex h-[31px] shrink-0 items-center border-b-2 border-t border-b-[#808592] border-t-[#8a8e9c] bg-white pl-[2px] pr-[6px] text-[12px] tracking-[-0.3px] text-black`}>
              <SimulinkLogo boxed />
              <span className="ml-[2px]">prob_4_3</span>
              <svg width="6" height="9" viewBox="0 0 6 9" className="ml-[5px]"><path d="M.5 0L6 4.500L.5 9Z" fill="#000" /></svg>
              <div className="ml-auto flex"><Caret color="#000" /></div>
            </div>
            <div className="flex-1 overflow-hidden border-b border-[#8a8e9c] bg-white"><Diagram /></div>
          </div>
        </div>
        <div className={`${UI} flex h-[20px] shrink-0 items-center pl-[6px] text-[12px] leading-none tracking-[-0.3px] text-black`}>
          <span className="w-[842px]">Ready</span>
          <span className="w-[272px] text-[#000080] underline">View 1 warning</span>
          <span>80%</span>
          <span className="ml-auto mr-[2px]">ode1</span>
          <div className="h-[15px] w-px bg-[#c8c8c8]" />
          <svg width="18" height="12" viewBox="0 0 18 12" className="mt-[4px]">
            <path d="M14 2h2M14 6h2M10 6h2M14 10h2M10 10h2M6 10h2" stroke="#b0b0b0" strokeWidth="2" />
          </svg>
        </div>
      </div>
    </div>
  );
}

/* ------------------------------------------------------------------ */
/* Desktops                                                            */
/* ------------------------------------------------------------------ */

function RightWallpaper() {
  return (
    <svg width="1920" height="1200" viewBox="1920 0 1920 1200" className="absolute left-[1920px] top-0">
      <defs>
        <filter id="b3" x="-20%" y="-20%" width="140%" height="140%"><feGaussianBlur stdDeviation="4" /></filter>
        <filter id="b1" x="-20%" y="-20%" width="140%" height="140%"><feGaussianBlur stdDeviation="1.200" /></filter>
        <radialGradient id="teal" cx="50%" cy="50%" r="50%">
          <stop offset="0" stopColor="#2b6a90" stopOpacity=".45" /><stop offset="1" stopColor="#2b6a90" stopOpacity="0" />
        </radialGradient>
      </defs>
      <ellipse cx="3780" cy="60" rx="330" ry="330" fill="url(#teal)" />
      <path d="M3245 1105Q3300 1145 3358 1206" stroke="#7fe0ff" strokeWidth="18" fill="none" filter="url(#b3)" />
      <path d="M3245 1105Q3300 1145 3356 1206" stroke="#fff" strokeWidth="10" fill="none" filter="url(#b1)" />
      <path d="M1915 1145Q1955 1118 2000 1094" stroke="#d8f4ff" strokeWidth="7" fill="none" filter="url(#b1)" />
      <path d="M2030 1120Q1996 1160 1973 1204" stroke="#8fdcff" strokeOpacity=".55" strokeWidth="6" fill="none" />
      <path d="M2046 1120Q2028 1160 2025 1204" stroke="#8fdcff" strokeOpacity=".5" strokeWidth="2.500" fill="none" />
      <path d="M2080 1120Q2056 1160 2038 1204" stroke="#b8f47c" strokeWidth="4.500" fill="none" />
      <path d="M2102 1120Q2094 1160 2092 1204" stroke="#8fdcff" strokeOpacity=".4" strokeWidth="2" fill="none" />
      <path d="M2560 1165Q2610 1140 2670 1124" stroke="#a8e8ff" strokeOpacity=".45" strokeWidth="2" fill="none" />
      <path d="M3720 124Q3780 66 3845 18" stroke="#7fb4d0" strokeOpacity=".55" strokeWidth="2.500" fill="none" filter="url(#b1)" />
    </svg>
  );
}

export default function App() {
  return (
    <div className="relative h-[1200px] w-[3840px] overflow-hidden bg-[#024aa4]">
      <div className="absolute left-0 top-0 h-[1200px] w-[1920px] bg-[linear-gradient(180deg,#6c86a4_0,#6c86a4_20px,#0a2a4c_24px,#0a2a4c_49px,#8c8c8c_50px,#7c8288_142px,#a0a4a8_144px,#70767c_300px,#5c5c5c_760px,#5c5c5c_1080px,#9c9c9c_1084px,#a4a4a4_1160px)]" />
      <div className="absolute left-[1920px] top-0 h-[1200px] w-[1920px] bg-[radial-gradient(1550px_1200px_at_470px_1000px,#3cccfa_0,#14b8fa_17%,#06a0f8_36%,#0080e8_52%,#0060d0_66%,#0048a4_86%,#013f98_100%)]" />
      <RightWallpaper />
      <ScopeWindow />
      <Taskbar />
      <EditorWindow />
    </div>
  );
}
